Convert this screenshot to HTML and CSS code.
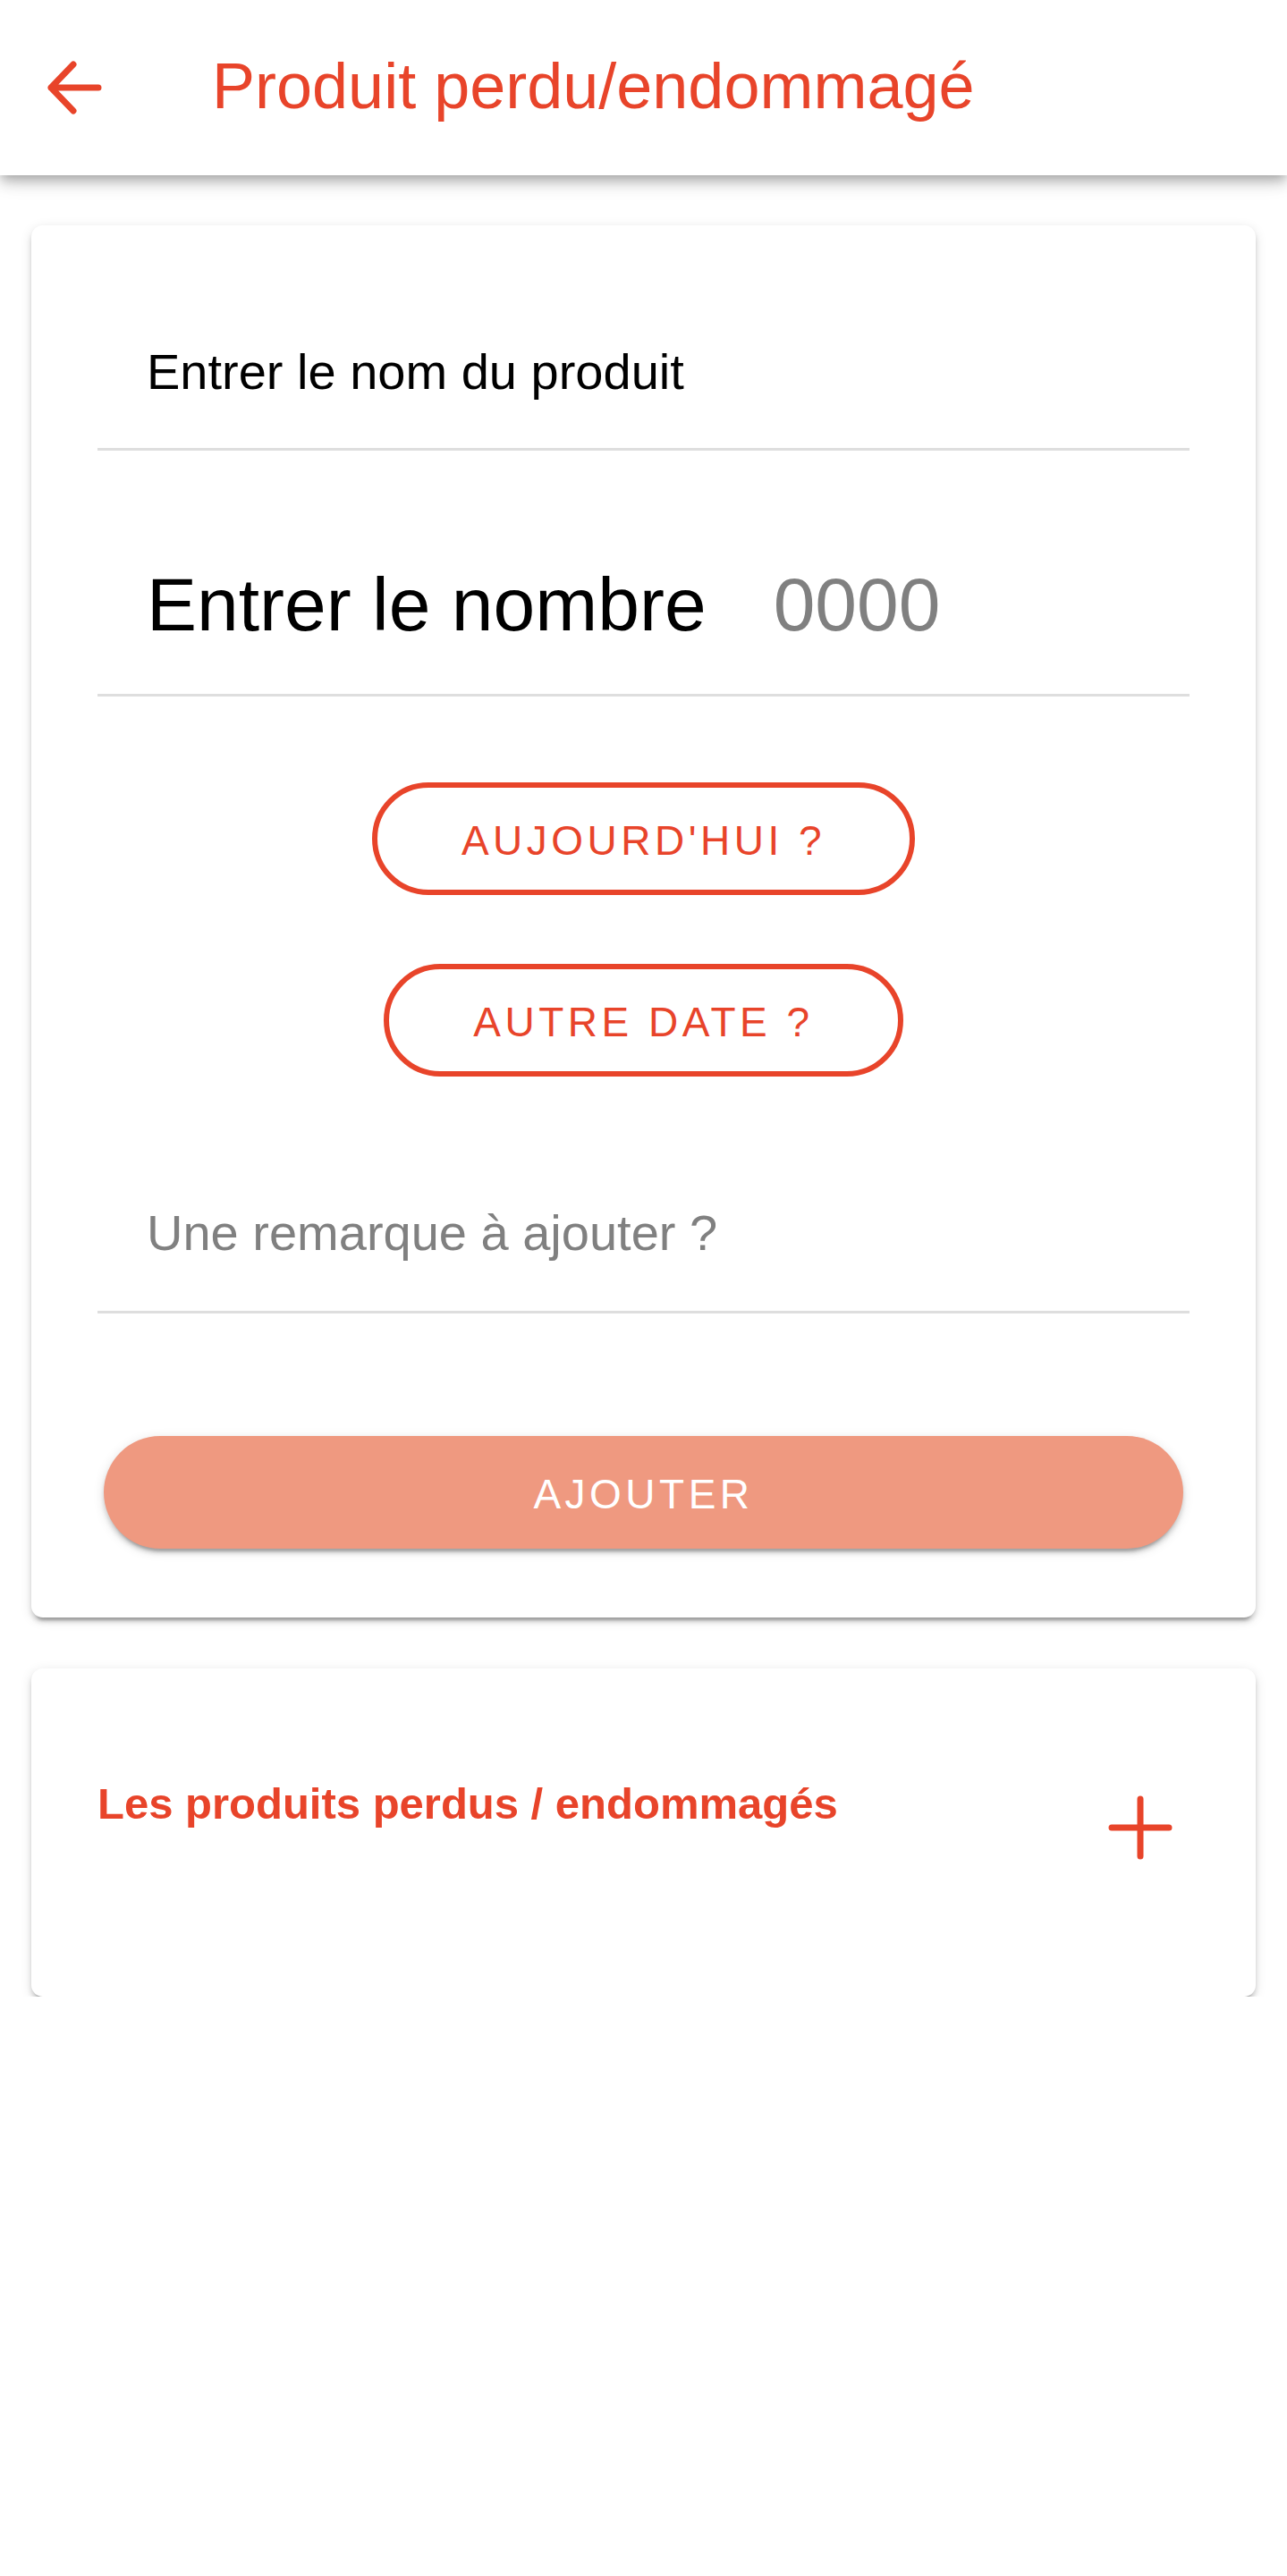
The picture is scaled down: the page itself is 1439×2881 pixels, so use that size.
FILE: index.html
```html
<!DOCTYPE html>
<html lang="fr">
<head>
    <meta charset="utf-8"/>
    <title>Produit perdu/endommagé</title>
    <link rel="stylesheet" href="styles.css">
</head>
<body>
<header class="toolbar">
    <svg class="back-icon" viewBox="0 0 70 70">
        <path d="M34 9 L9 35 L34 61 M9 35 H62" fill="none" stroke="#e8442a" stroke-width="7" stroke-linecap="round" stroke-linejoin="round"/>
    </svg>
    <h1 class="toolbar-title">Produit perdu/endommagé</h1>
</header>

<main class="content">
    <form class="card loss-form" action="javascript:void(0)">
        <div class="field field-name">Entrer le nom du produit</div>
        <div class="field field-count"><span>Entrer le nombre</span><span class="placeholder count-placeholder">0000</span></div>

        <button type="button" class="date-button">AUJOURD'HUI ?</button>
        <button type="button" class="date-button">AUTRE DATE ?</button>

        <div class="field field-remark placeholder">Une remarque à ajouter ?</div>

        <button type="submit" class="submit-button">AJOUTER</button>
    </form>

    <section class="card list-card">
        <h2 class="list-title">Les produits perdus / endommagés</h2>
        <svg class="add-icon" viewBox="0 0 76 76">
            <path d="M38 6 V70 M6 38 H70" fill="none" stroke="#e8442a" stroke-width="7" stroke-linecap="round"/>
        </svg>
    </section>
</main>
</body>
</html>
```

FILE: styles.css
```css
body {
    margin: 0;
    background: #fff;
    font-family: "Liberation Sans", Arial, sans-serif;
}

.toolbar {
    position: relative;
    z-index: 1;
    height: 196px;
    display: flex;
    align-items: center;
    padding-left: 48px;
    background: #fff;
    box-shadow: 0 5px 10px -3px rgba(0, 0, 0, 0.2),
                0 10px 13px 0 rgba(0, 0, 0, 0.14),
                0 3px 26px 0 rgba(0, 0, 0, 0.12);
}

.back-icon {
    flex: none;
    width: 70px;
    height: 70px;
}

.toolbar-title {
    margin: 0 0 5px 119px;
    font-size: 72px;
    line-height: 80px;
    font-weight: normal;
    color: #e8442a;
}

.content {
    padding: 56px 35px 0;
}

.card {
    background: #fff;
    border-radius: 13px;
    box-shadow: 0 8px 3px -5px rgba(0, 0, 0, 0.22),
                0 5px 5px 0 rgba(0, 0, 0, 0.14),
                0 3px 13px 0 rgba(0, 0, 0, 0.12);
}

.loss-form {
    display: flex;
    flex-direction: column;
    margin: 0;
    padding: 124px 74px 77px;
}

.field {
    padding-left: 55px;
    border-bottom: 3px solid #dedede;
    color: #000;
    white-space: nowrap;
}

.placeholder {
    color: #808080;
}

.field-name {
    font-size: 56px;
    line-height: 80px;
    padding-bottom: 45px;
}

.field-count {
    margin-top: 122px;
    font-size: 84px;
    line-height: 100px;
    padding-bottom: 50px;
}

.count-placeholder {
    margin-left: 75px;
}

.field-remark {
    margin-top: 135px;
    font-size: 56px;
    line-height: 80px;
    padding-bottom: 47px;
}

.date-button,
.submit-button {
    box-sizing: border-box;
    height: 126px;
    border-radius: 63px;
    padding-top: 4px;
    font-family: inherit;
    font-size: 46px;
    line-height: 50px;
    letter-spacing: 4.5px;
    cursor: pointer;
}

.date-button {
    align-self: center;
    margin-top: 96px;
    padding-left: 94px;
    padding-right: 94px;
    border: 6px solid #e8442a;
    background: #fff;
    color: #e8442a;
}

.date-button + .date-button {
    margin-top: 77px;
}

.submit-button {
    margin: 137px 7px 0;
    border: none;
    background: #ef9980;
    color: #fff;
    box-shadow: 0 8px 3px -5px rgba(0, 0, 0, 0.2),
                0 5px 5px 0 rgba(0, 0, 0, 0.14),
                0 3px 13px 0 rgba(0, 0, 0, 0.12);
}

.list-card {
    display: flex;
    align-items: flex-start;
    box-sizing: border-box;
    height: 367px;
    margin-top: 57px;
    padding: 123px 91px 0 74px;
}

.list-title {
    flex: 1;
    margin: 0;
    font-size: 49px;
    line-height: 56px;
    font-weight: bold;
    color: #e8442a;
}

.add-icon {
    flex: none;
    width: 76px;
    height: 76px;
    margin-top: 17px;
}
```
